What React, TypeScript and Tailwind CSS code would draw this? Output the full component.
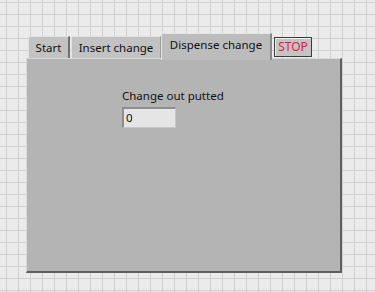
const App = () => {
  return (
    <div className="w-[375px] h-[292px] overflow-hidden bg-[#ebebeb] bg-[linear-gradient(to_right,#d0d0d0_1px,transparent_1px),linear-gradient(to_bottom,#d0d0d0_1px,transparent_1px)] bg-[size:12px_12px] bg-[position:6px_2px] pt-[33px] pl-[26px] font-['Noto_Sans',sans-serif] text-[11.5px] text-[#111]">
      <div className="flex flex-col w-[316px]">
        <div className="flex items-end pl-[2px] h-[25px]">
          <div className="h-[22px] w-[42px] bg-[#c2c2c2] border-t border-l border-[#e2e2e2] border-r-2 border-r-[#6e6e6e] flex items-center justify-center rounded-tl-[2px]">
            Start
          </div>
          <div className="h-[22px] w-[90px] ml-[1px] bg-[#c2c2c2] border-t border-l border-[#e2e2e2] border-r border-r-[#9a9a9a] flex items-center justify-center rounded-tl-[2px]">
            Insert change
          </div>
          <div className="h-[27px] w-[111px] -mb-[2px] bg-[#bcbcbc] border-t border-l border-[#e6e6e6] border-r-2 border-r-[#8a8a8a] flex items-start justify-center pt-[2px] rounded-tl-[2px] relative z-10">
            Dispense change
          </div>
          <div className="h-[20px] w-[38px] ml-[2px] mb-[1px] bg-[#c4c4c4] border border-[#3c3c3c] shadow-[inset_1px_1px_0_#eeeeee] flex items-center justify-center text-[#e8174a] text-[12px]">
            STOP
          </div>
        </div>
        <div className="h-[215px] bg-[#b4b4b4] border-t border-l border-[#d8d8d8] border-r-2 border-b-2 border-r-[#5e5e5e] border-b-[#5e5e5e] pl-[95px] pt-[29px]">
          <div className="leading-[16px]">Change out putted</div>
          <div className="mt-[3px] w-[54px] h-[21px] bg-[#e5e5e5] border-l-2 border-t-2 border-[#8e8e8e] border-r border-b border-r-[#c8c8c8] border-b-[#c8c8c8] flex items-center pl-[2px] leading-none">
            0
          </div>
        </div>
      </div>
    </div>
  )
}

export default App
